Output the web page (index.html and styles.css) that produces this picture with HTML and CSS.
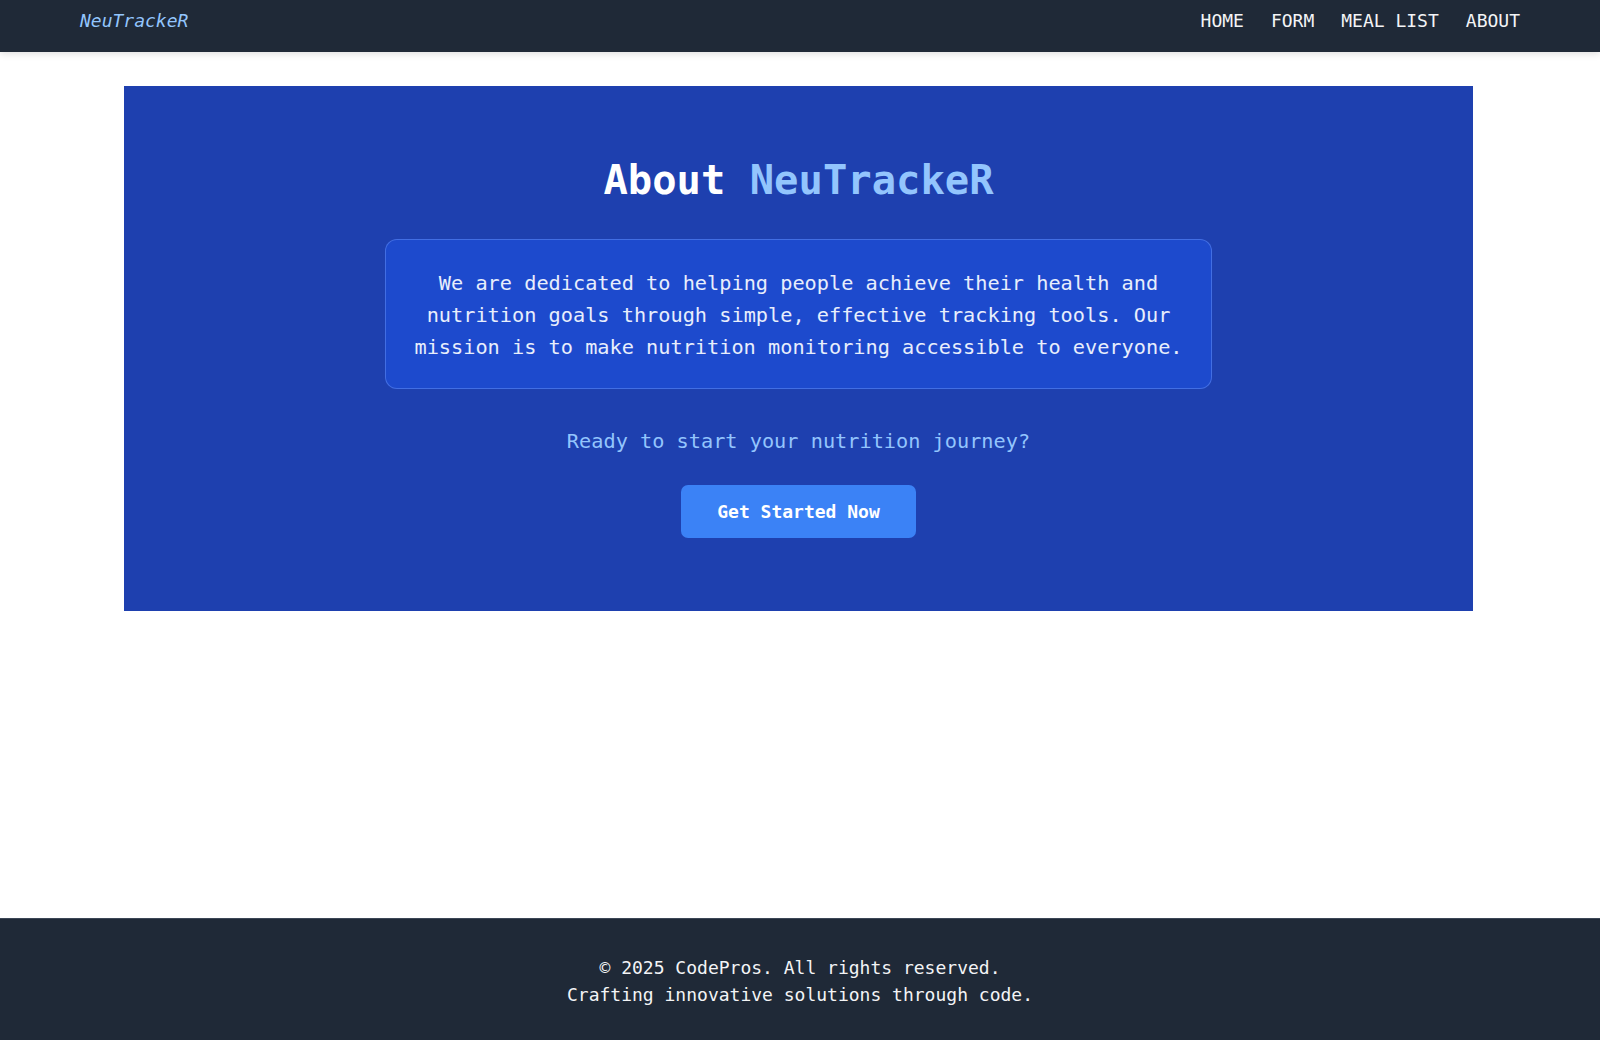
FILE: index.html
```html
<!DOCTYPE html>
<html lang="en">
<head>
<meta charset="utf-8">
<title>About NeuTrackeR</title>
<link rel="stylesheet" href="styles.css">
</head>
<body>
<header class="site-header">
  <div class="header-inner">
    <a class="logo" href="#">NeuTrackeR</a>
    <nav class="nav">
      <a href="#">HOME</a>
      <a href="#">FORM</a>
      <a href="#">MEAL LIST</a>
      <a href="#">ABOUT</a>
    </nav>
  </div>
</header>
<main class="main">
  <section class="about">
    <h1 class="about-title">About <span class="accent">NeuTrackeR</span></h1>
    <div class="mission">
      <p>We are dedicated to helping people achieve their health and nutrition goals through simple, effective tracking tools. Our mission is to make nutrition monitoring accessible to everyone.</p>
    </div>
    <p class="ready">Ready to start your nutrition journey?</p>
    <a class="cta" href="#">Get Started Now</a>
  </section>
</main>
<footer class="site-footer">
  <p>© 2025 CodePros. All rights reserved.</p>
  <p>Crafting innovative solutions through code.</p>
</footer>
</body>
</html>
```
FILE: styles.css
```css
* { box-sizing: border-box; }
html, body { margin: 0; padding: 0; }
body {
  font-family: "DejaVu Sans Mono", "Liberation Mono", monospace;
  background: #ffffff;
  min-height: 100vh;
  display: flex;
  flex-direction: column;
  color: #ffffff;
}
a { text-decoration: none; color: inherit; }

.site-header {
  background: #1f2937;
  height: 52px;
  box-shadow: 0 2px 7px rgba(0, 0, 0, 0.13);
  position: relative;
  z-index: 1;
}
.header-inner {
  max-width: 1440px;
  margin: 0 auto;
  padding-top: 7px;
  display: flex;
  justify-content: space-between;
  align-items: flex-start;
  font-size: 18px;
  line-height: 27px;
}
.logo {
  color: #93c5fd;
  font-style: italic;
}
.nav {
  display: flex;
  gap: 27px;
}
.nav a { color: #f3f4f6; }

.main {
  flex: 1;
  padding-top: 34px;
}
.about {
  width: 1349px;
  margin: 0 127px 0 124px;
  background: #1e40af;
  padding: 70px 0 73px;
  display: flex;
  flex-direction: column;
  align-items: center;
  text-align: center;
}
.about-title {
  margin: 0 0 35px;
  font-size: 40.5px;
  line-height: 48px;
  font-weight: 700;
  color: #ffffff;
}
.accent { color: #93c5fd; }
.mission {
  width: 827px;
  background: #1d4acd;
  border: 1px solid rgba(96, 140, 246, 0.55);
  border-radius: 12px;
  padding: 27px 20px 25px;
}
.mission p {
  margin: 0;
  font-size: 20.25px;
  line-height: 32px;
  color: #e8eefc;
}
.ready {
  margin: 36px 0 0;
  font-size: 20.25px;
  line-height: 32.4px;
  color: #93c5fd;
}
.cta {
  margin-top: 28px;
  display: inline-block;
  background: #3b82f6;
  color: #ffffff;
  font-weight: 700;
  font-size: 18px;
  line-height: 27px;
  padding: 13px 36px;
  border-radius: 7px;
}

.site-footer {
  background: #1f2937;
  border-top: 1px solid #3b4656;
  padding: 36px 0 32px;
  text-align: center;
  font-size: 18px;
  line-height: 26.5px;
  color: #f3f4f6;
}
.site-footer p { margin: 0; }
```
